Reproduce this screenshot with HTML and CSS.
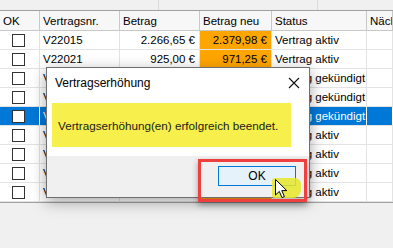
FILE: index.html
```html
<!DOCTYPE html>
<html lang="de">
<head>
    <meta charset="UTF-8">
    <title>Vertragserhöhung</title>
    <link rel="stylesheet" href="styles.css">
</head>
<body>
    <div class="window">
        <div class="strip">
            <div class="strip-box"></div>
            <div class="strip-box"></div>
        </div>

        <div class="grid">
            <div class="row head">
                <div class="cell">OK</div>
                <div class="cell">Vertragsnr.</div>
                <div class="cell">Betrag</div>
                <div class="cell">Betrag neu</div>
                <div class="cell">Status</div>
                <div class="cell">Näch</div>
            </div>
            <div class="row">
                <div class="cell check"><span class="box"></span></div>
                <div class="cell">V22015</div>
                <div class="cell num">2.266,65 €</div>
                <div class="cell num new">2.379,98 €</div>
                <div class="cell">Vertrag aktiv</div>
                <div class="cell"></div>
            </div>
            <div class="row">
                <div class="cell check"><span class="box"></span></div>
                <div class="cell">V22021</div>
                <div class="cell num">925,00 €</div>
                <div class="cell num new">971,25 €</div>
                <div class="cell">Vertrag aktiv</div>
                <div class="cell"></div>
            </div>
            <div class="row">
                <div class="cell check"><span class="box"></span></div>
                <div class="cell">V22034</div>
                <div class="cell num">1.410,00 €</div>
                <div class="cell num new">1.480,50 €</div>
                <div class="cell">Vertrag gekündigt</div>
                <div class="cell"></div>
            </div>
            <div class="row">
                <div class="cell check"><span class="box"></span></div>
                <div class="cell">V22040</div>
                <div class="cell num">780,00 €</div>
                <div class="cell num new">819,00 €</div>
                <div class="cell">Vertrag gekündigt</div>
                <div class="cell"></div>
            </div>
            <div class="row selected">
                <div class="cell check"><span class="box"></span></div>
                <div class="cell">V22052</div>
                <div class="cell num">1.050,00 €</div>
                <div class="cell num new">1.102,50 €</div>
                <div class="cell">Vertrag gekündigt</div>
                <div class="cell"></div>
            </div>
            <div class="row">
                <div class="cell check"><span class="box"></span></div>
                <div class="cell">V22063</div>
                <div class="cell num">640,00 €</div>
                <div class="cell num new">672,00 €</div>
                <div class="cell">Vertrag aktiv</div>
                <div class="cell"></div>
            </div>
            <div class="row">
                <div class="cell check"><span class="box"></span></div>
                <div class="cell">V22071</div>
                <div class="cell num">2.100,00 €</div>
                <div class="cell num new">2.205,00 €</div>
                <div class="cell">Vertrag aktiv</div>
                <div class="cell"></div>
            </div>
            <div class="row">
                <div class="cell check"><span class="box"></span></div>
                <div class="cell">V22078</div>
                <div class="cell num">995,00 €</div>
                <div class="cell num new">1.044,75 €</div>
                <div class="cell">Vertrag aktiv</div>
                <div class="cell"></div>
            </div>
            <div class="row">
                <div class="cell check"><span class="box"></span></div>
                <div class="cell">V22085</div>
                <div class="cell num">1.320,00 €</div>
                <div class="cell num new">1.386,00 €</div>
                <div class="cell">Vertrag aktiv</div>
                <div class="cell"></div>
            </div>
        </div>

        <!-- message box on top of the grid -->
        <div class="dialog">
            <div class="dialog-title">
                <span>Vertragserhöhung</span>
                <svg class="close" width="12" height="12" viewBox="0 0 12 12">
                    <path d="M1 1 L11 11 M11 1 L1 11" stroke="#111" stroke-width="1.1" fill="none"/>
                </svg>
            </div>
            <div class="dialog-body">
                <div class="message">Vertragserhöhung(en) erfolgreich beendet.</div>
            </div>
            <div class="dialog-footer">
                <button class="ok">OK</button>
            </div>
        </div>

        <div class="highlight"></div>

        <div class="cursor">
            <span class="cursor-glow"></span>
            <svg class="arrow" width="13" height="20" viewBox="0 0 13 20">
                <path d="M0.5 0.5 L0.5 16 L4.3 12.4 L7 18.6 L9.4 17.6 L6.8 11.6 L11.8 11.6 Z" fill="#fff" stroke="#000" stroke-width="1" stroke-linejoin="round"/>
            </svg>
        </div>
    </div>
</body>
</html>
```

FILE: styles.css
```css
:root {
    --grid-line: #e3e3e3;
    --head-line: #c8c8c8;
    --select: #0078d7;
    --orange: #ffa500;
}

body {
    margin: 0;
    background: #f0f0f0;
    font-family: "Liberation Sans", Arial, sans-serif;
    font-size: 11.5px;
    color: #000;
}

.window {
    position: relative;
    width: 393px;
    height: 248px;
    overflow: hidden;
    background: #f0f0f0;
}

.strip {
    height: 10px;
    display: flex;
    border-bottom: 1px solid #a0a0a0;
}

.strip-box {
    width: 158px;
    border-right: 1px solid #dadada;
}

.grid {
    background: #fff;
    border-bottom: 1px solid #a0a0a0;
    height: 191px;
    overflow: hidden;
}

.row {
    display: grid;
    grid-template-columns: 40px 80px 80px 72px 95px 1fr;
    height: 19px;
    box-sizing: border-box;
    border-bottom: 1px solid var(--grid-line);
}

.cell {
    display: flex;
    align-items: center;
    padding: 0 3px;
    border-right: 1px solid var(--grid-line);
    white-space: nowrap;
    overflow: hidden;
}

.cell:first-child {
    padding-left: 2px;
}

.head {
    height: 20px;
    background: #f7f7f7;
    border-bottom: 1px solid var(--head-line);
}

.head .cell {
    border-right-color: var(--head-line);
    padding-left: 3px;
}

.num {
    justify-content: flex-end;
    padding-right: 4px;
}

.new {
    background: var(--orange);
}

.check {
    justify-content: center;
}

.box {
    width: 11px;
    height: 11px;
    border: 1px solid #333;
    background: #fff;
    margin-left: -1px;
}

.selected {
    background: var(--select);
    color: #fff;
}

.selected .cell {
    border-right-color: #fff;
}

.selected .new {
    background: var(--select);
}

/* dialog */

.dialog {
    position: absolute;
    left: 46px;
    top: 67px;
    width: 262px;
    height: 129px;
    border: 1px solid #6f6f6f;
    background: #fff;
    box-shadow: 0 4px 14px rgba(0, 0, 0, 0.35);
    display: flex;
    flex-direction: column;
}

.dialog-title {
    height: 30px;
    display: flex;
    align-items: center;
    justify-content: space-between;
    padding: 0 9px 0 8px;
    font-size: 12px;
}

.close {
    margin-top: -1px;
}

.dialog-body {
    flex: 1;
    padding: 5px 18px 0 5px;
}

.message {
    height: 44px;
    background: #f7f04c;
    display: flex;
    align-items: center;
    padding-left: 6px;
    color: #1a1a1a;
    font-size: 11.7px;
}

.dialog-footer {
    height: 41px;
    background: #f0f0f0;
    display: flex;
    justify-content: flex-end;
    align-items: flex-start;
    padding: 10px 13px 0 0;
    box-sizing: border-box;
}

.ok {
    width: 78px;
    height: 20px;
    border: 1px solid #0078d7;
    background: #e5f1fb;
    font-family: inherit;
    font-size: 12px;
    color: #000;
    padding: 0;
}

.highlight {
    position: absolute;
    left: 198px;
    top: 159px;
    width: 103px;
    height: 37px;
    border: 3px solid #ef3f3f;
    box-shadow: 0 3px 6px rgba(0, 0, 0, 0.35);
}

.cursor {
    position: absolute;
    left: 272px;
    top: 178px;
    width: 30px;
    height: 22px;
}

.cursor-glow {
    position: absolute;
    left: 0;
    top: 0;
    width: 29px;
    height: 20px;
    border-radius: 3px 6px 8px 3px;
    background: rgba(232, 232, 40, 0.85);
}

.arrow {
    position: absolute;
    left: 3px;
    top: 1px;
}
```
